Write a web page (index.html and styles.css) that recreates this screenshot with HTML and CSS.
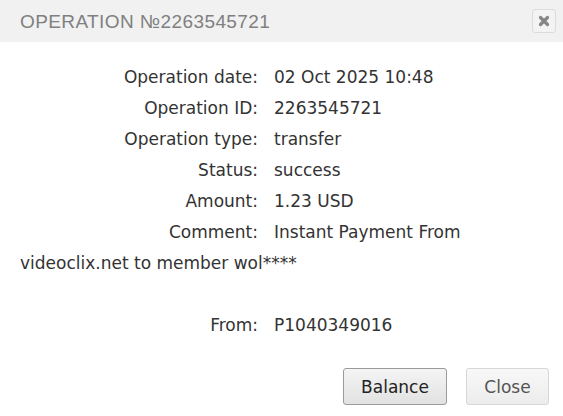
FILE: index.html
```html
<!DOCTYPE html>
<html>
<head>
<meta charset="utf-8">
<link rel="stylesheet" href="styles.css">
</head>
<body>
<div class="dialog">
  <div class="header">
    <div class="title">OPERATION №2263545721</div>
    <button class="x-btn" aria-label="close">
      <svg width="12" height="12" viewBox="0 0 12 12"><path d="M2.5 2.5 L9.5 9.5 M9.5 2.5 L2.5 9.5" stroke="#858585" stroke-width="3.2" stroke-linecap="round"/></svg>
    </button>
  </div>
  <div class="body">
    <div class="row"><span class="label">Operation date:</span><span class="value">02 Oct 2025 10:48</span></div>
    <div class="row"><span class="label">Operation ID:</span><span class="value">2263545721</span></div>
    <div class="row"><span class="label">Operation type:</span><span class="value">transfer</span></div>
    <div class="row"><span class="label">Status:</span><span class="value">success</span></div>
    <div class="row"><span class="label">Amount:</span><span class="value">1.23 USD</span></div>
    <div class="row"><span class="label">Comment:</span><span class="value">Instant Payment From videoclix.net to member wol****</span></div>
    <div class="row from"><span class="label">From:</span><span class="value">P1040349016</span></div>
  </div>
  <div class="footer">
    <button class="btn btn-primary">Balance</button>
    <button class="btn btn-close">Close</button>
  </div>
</div>
</body>
</html>
```
FILE: styles.css
```css
html, body {
  margin: 0;
  padding: 0;
  background: #ffffff;
}
.dialog {
  width: 563px;
  height: 416px;
  font-family: "DejaVu Sans", sans-serif;
  color: #333333;
  background: #ffffff;
}
.header {
  height: 42px;
  background: #f1f1f1;
  display: flex;
  align-items: center;
  justify-content: space-between;
  padding: 0 7px 0 20px;
  box-sizing: border-box;
}
.title {
  font-family: "Liberation Sans", sans-serif;
  font-size: 19px;
  letter-spacing: 0.4px;
  color: #808080;
  padding-top: 1px;
}
.x-btn {
  width: 24px;
  height: 24px;
  padding: 0;
  border: 1px solid #dcdcdc;
  border-radius: 3px;
  background: #f3f3f3;
  display: flex;
  align-items: center;
  justify-content: center;
}
.body {
  padding: 20px 20px 0 20px;
  font-size: 17px;
  line-height: 31px;
}
.label {
  display: inline-block;
  width: 238px;
  text-align: right;
  margin-right: 16px;
}
.from {
  margin-top: 31px;
}
.footer {
  display: flex;
  justify-content: flex-end;
  gap: 19px;
  padding: 27px 14px 0 0;
}
.btn {
  font-family: "DejaVu Sans", sans-serif;
  font-size: 17px;
  height: 37px;
  border-radius: 3px;
  padding: 0;
}
.btn-primary {
  width: 104px;
  color: #222222;
  border: 1px solid #9a9a9a;
  background: linear-gradient(#f4f4f4, #e2e2e2);
}
.btn-close {
  width: 83px;
  color: #555555;
  border: 1px solid #d6d6d6;
  background: linear-gradient(#f8f8f8, #ececec);
}
```
